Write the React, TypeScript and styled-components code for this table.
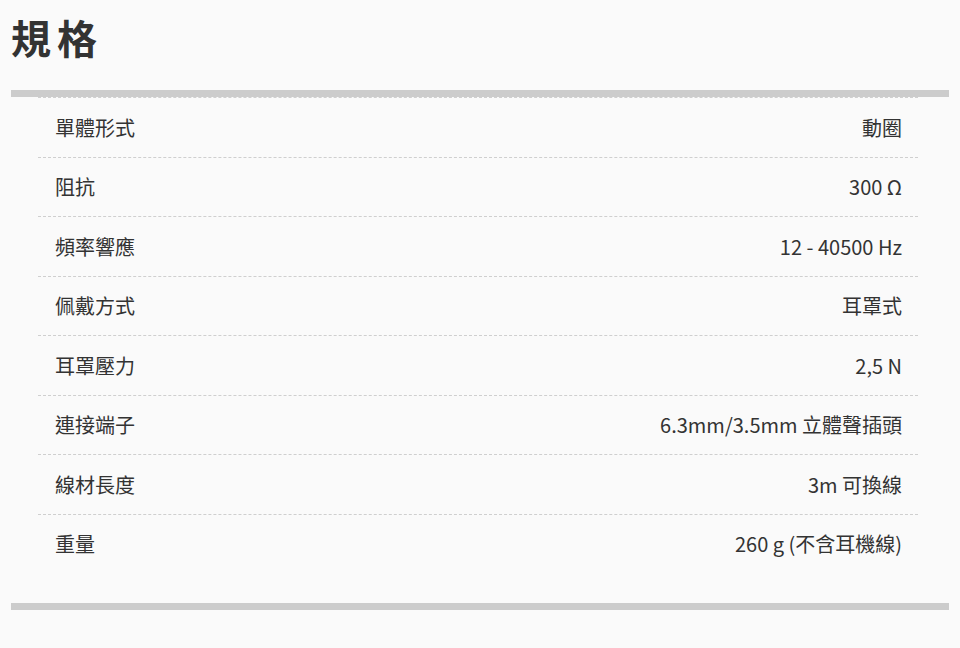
import React from 'react';
import styled, { createGlobalStyle } from 'styled-components';

const GlobalStyle = createGlobalStyle`
  html, body {
    margin: 0;
    padding: 0;
    background: #fafafa;
  }
  body {
    font-family: 'Noto Sans CJK TC', 'Noto Sans', sans-serif;
    color: #333333;
  }
`;

const Page = styled.div({
  width: 960,
  height: 648,
  padding: '7px 11px 0',
  boxSizing: 'border-box',
  background: '#fafafa',
});

const Title = styled.h1({
  margin: 0,
  fontSize: '40px',
  lineHeight: '60px',
  fontWeight: 700,
  letterSpacing: '6px',
  color: '#333333',
});

const Bar = styled.div({
  height: 7,
  background: '#cccccc',
});

const TopBar = styled(Bar)({
  marginTop: 23,
});

const BottomBar = styled(Bar)({
  marginTop: 30,
});

const SpecList = styled.div({
  display: 'flex',
  flexDirection: 'column',
  margin: '0 31px 0 27px',
});

const SpecRow = styled.div({
  display: 'flex',
  alignItems: 'center',
  justifyContent: 'space-between',
  height: '59.5px',
  padding: '0 16px 0 17px',
  borderTop: '1px dashed #cfcfcf',
  boxSizing: 'border-box',
  fontSize: '20px',
  color: '#333333',
});

const Label = styled.span({});

const Value = styled.span({
  textAlign: 'right',
});

const specs: [string, string][] = [
  ['單體形式', '動圈'],
  ['阻抗', '300 Ω'],
  ['頻率響應', '12 - 40500 Hz'],
  ['佩戴方式', '耳罩式'],
  ['耳罩壓力', '2,5 N'],
  ['連接端子', '6.3mm/3.5mm 立體聲插頭'],
  ['線材長度', '3m 可換線'],
  ['重量', '260 g (不含耳機線)'],
];

export default function App() {
  return (
    <>
      <GlobalStyle />
      <Page>
        <Title>規格</Title>
        <TopBar />
        <SpecList>
          {specs.map(([label, value]) => (
            <SpecRow key={label}>
              <Label>{label}</Label>
              <Value>{value}</Value>
            </SpecRow>
          ))}
        </SpecList>
        <BottomBar />
      </Page>
    </>
  );
}
